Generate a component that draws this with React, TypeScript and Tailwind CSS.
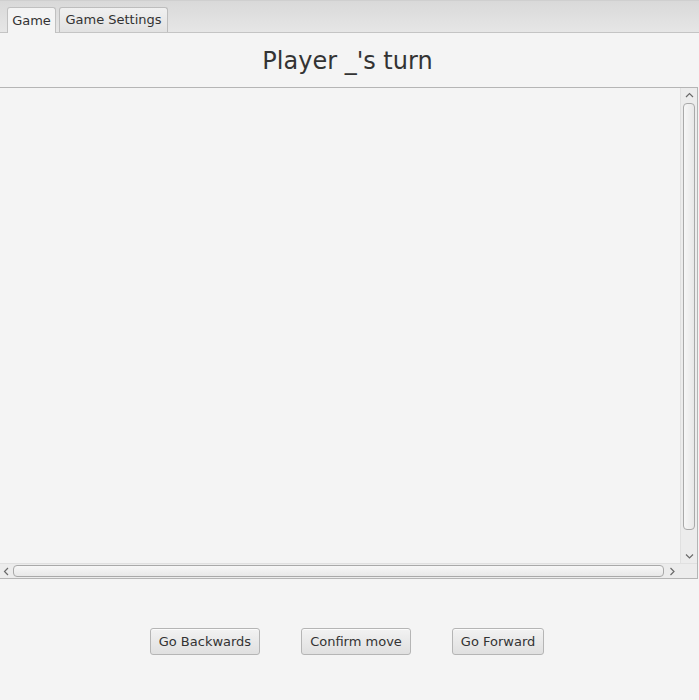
import React from 'react';

function Arrow({ dir }: { dir: 'up' | 'down' | 'left' | 'right' }) {
  const paths: Record<string, string> = {
    up: 'M1 5 L4.5 1.5 L8 5',
    down: 'M1 1.5 L4.5 5 L8 1.5',
    left: 'M5 1 L1.5 4.5 L5 8',
    right: 'M1.5 1 L5 4.5 L1.5 8',
  };
  const vertical = dir === 'up' || dir === 'down';
  return (
    <svg width={vertical ? 9 : 7} height={vertical ? 7 : 9} viewBox={vertical ? '0 0 9 7' : '0 0 7 9'}>
      <path d={paths[dir]} fill="none" stroke="#6a6a6a" strokeWidth="1.2" />
    </svg>
  );
}

function Btn({ label }: { label: string }) {
  return (
    <button className="h-[27px] px-[8px] rounded-[3px] border border-[#b5b5b5] bg-gradient-to-b from-[#f2f2f2] to-[#e0e0e0] text-[13px] text-[#333] shadow-[inset_0_1px_0_#fbfbfb]">
      {label}
    </button>
  );
}

export default function App() {
  return (
    <div
      className="w-[699px] h-[700px] bg-[#f4f4f4] flex flex-col text-[#333]"
      style={{ fontFamily: '"DejaVu Sans", sans-serif' }}
    >
      {/* tab header */}
      <div className="h-[33px] bg-gradient-to-b from-[#d9d9d9] to-[#e6e6e6] border-b border-[#c4c4c4] flex items-end pl-[7px] gap-[3px] border-t border-t-[#cfcfcf]">
        <div className="h-[26px] w-[49px] -mb-px bg-[#f4f4f4] border border-b-0 border-[#c0c0c0] rounded-t-[3px] flex items-center justify-center text-[13px]">
          Game
        </div>
        <div className="h-[25px] w-[109px] bg-gradient-to-b from-[#f0f0f0] to-[#e2e2e2] border border-b-0 border-[#bdbdbd] rounded-t-[3px] flex items-center justify-center text-[13px]">
          Game Settings
        </div>
      </div>

      {/* title */}
      <div className="h-[54px] flex items-center justify-center text-[24px] leading-none pt-[1px] pr-[4px]">
        Player _'s turn
      </div>

      {/* scroll pane */}
      <div className="w-[698px] h-[492px] border border-[#b5b5b5] border-l-0 flex flex-col">
        <div className="flex-1 flex min-h-0">
          <div className="flex-1 bg-[#f4f4f4]" />
          <div className="w-[17px] bg-[#ececec] border-l border-[#e0e0e0] flex flex-col items-center">
            <div className="h-[14px] flex items-center justify-center">
              <Arrow dir="up" />
            </div>
            <div className="flex-1 flex flex-col">
              <div className="h-[427px] w-[12px] mt-[1px] rounded-[4px] border border-[#a9a9a9] bg-gradient-to-r from-[#f7f7f7] to-[#e8e8e8]" />
            </div>
            <div className="h-[14px] flex items-center justify-center">
              <Arrow dir="down" />
            </div>
          </div>
        </div>
        <div className="h-[15px] flex bg-[#ececec] border-t border-[#e0e0e0]">
          <div className="flex-1 flex items-center">
            <div className="w-[13px] flex justify-center">
              <Arrow dir="left" />
            </div>
            <div className="flex-1 h-[12px] rounded-[4px] border border-[#a9a9a9] bg-gradient-to-b from-[#f7f7f7] to-[#e8e8e8]" />
            <div className="w-[16px] flex justify-center">
              <Arrow dir="right" />
            </div>
          </div>
          <div className="w-[17px] bg-[#ececec]" />
        </div>
      </div>

      {/* buttons */}
      <div className="flex-1 flex items-start justify-center gap-[41px] pt-[49px] pr-[5px]">
        <Btn label="Go Backwards" />
        <Btn label="Confirm move" />
        <Btn label="Go Forward" />
      </div>
    </div>
  );
}
